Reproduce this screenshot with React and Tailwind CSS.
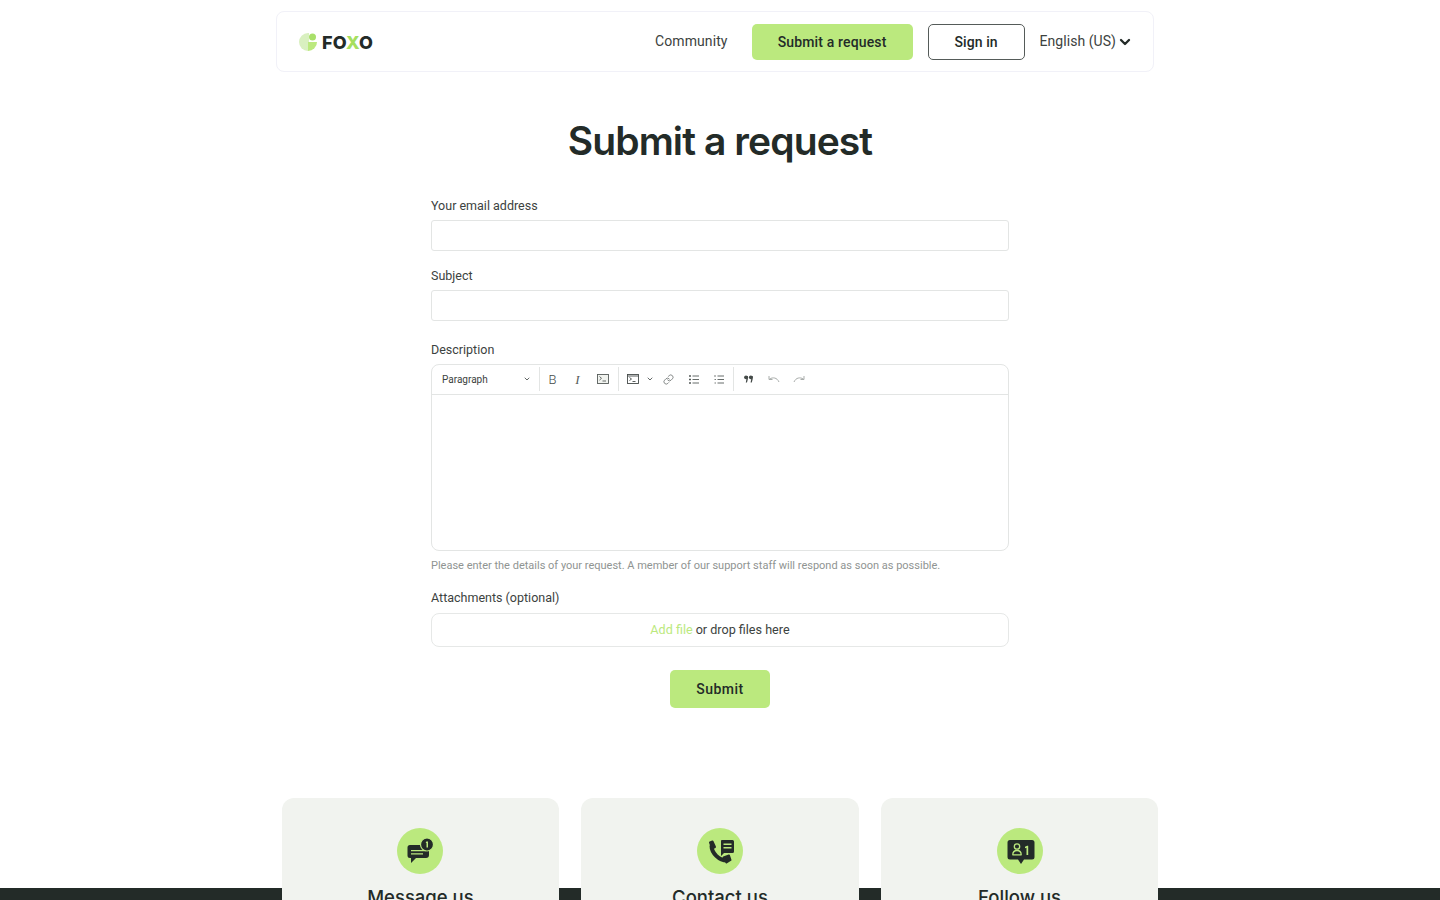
import React from 'react'
import { Link, ChevronDown } from 'lucide-react'

function Logo() {
  return (
    <div className="flex items-center">
      <svg width="18" height="18" viewBox="0 0 18 18" className="mr-[5px]">
        <path d="M9 0A9 9 0 0 0 9 18Z" fill="#d9f0c0" />
        <path d="M9 0h1v9H9z" fill="#d9f0c0" />
        <circle cx="13.500" cy="4" r="3.500" fill="#a9e06a" />
        <path d="M9 9H18A9 9 0 0 1 9 18Z" fill="#bce97f" />
      </svg>
      <span className="mt-[2px] font-['Inter',sans-serif] text-[18px] font-extrabold leading-none tracking-[0.3px] text-[#232b28]">
        FO<span className="text-[#a6df5f]">X</span>O
      </span>
    </div>
  )
}

function Header() {
  return (
    <header className="ml-[276px] mt-[11px] flex h-[61px] w-[878px] items-center rounded-lg border border-[#f1f1f8] pl-[22px] pr-[20px]">
      <Logo />
      <nav className="ml-auto flex items-center">
        <a className="mr-[24px] text-[14px] tracking-[0.1px] text-[#3c4240]">Community</a>
        <a className="mr-[15px] flex h-9 w-[161px] items-center justify-center rounded-[5px] bg-[#bbe97e] pt-px text-[14px] font-medium tracking-[0.15px] text-[#232b28]">Submit a request</a>
        <a className="mr-[15px] flex h-9 w-[97px] items-center justify-center rounded-[5px] border border-[#555b59] pt-px text-[14px] font-medium tracking-[0.1px] text-[#232b28]">Sign in</a>
        <span className="text-[14px] tracking-[0.05px] text-[#3c4240]">English (US)</span>
        <ChevronDown size={16} strokeWidth={3.500} className="ml-px text-[#232b28]" />
      </nav>
    </header>
  )
}

function Field({ label, className }) {
  return (
    <div className={className}>
      <label className="block text-[12.500px] leading-[20px] text-[#3c4240]">{label}</label>
      <div className="mt-[4px] h-[31px] rounded-[3px] border border-[#e3e5e4]" />
    </div>
  )
}

function ToolBtn({ children }) {
  return <span className="flex w-[25px] items-center justify-center">{children}</span>
}

function ImageIcon() {
  return (
    <svg width="12" height="10" viewBox="0 0 12 10" fill="none" stroke="#555b59" strokeWidth="0.9">
      <rect x="0.5" y="0.5" width="11" height="9" fill="#f1f3ef" />
      <path d="M2.500 2.500l2 1.800-2 1.800M5.500 7h3.500" />
    </svg>
  )
}

function SourceIcon() {
  return (
    <svg width="12" height="10" viewBox="0 0 12 10" fill="none" stroke="#454b49" strokeWidth="0.9">
      <rect x="0.5" y="0.5" width="11" height="9" />
      <path d="M0.5 2h11" />
      <path d="M2.500 3.500l2 1.500-2 1.500M5.500 7.500h3" />
    </svg>
  )
}

function ListIcon() {
  return (
    <svg width="10" height="9" viewBox="0 0 10 9" stroke="#555b59" strokeWidth="1">
      <path d="M0 1h2M0 4.500h2M0 8h2" strokeWidth="1.500" />
      <path d="M3.500 1H10M3.500 4.500H10M3.500 8H10" strokeWidth="0.9" />
    </svg>
  )
}

function NumberedIcon() {
  return (
    <svg width="10" height="9" viewBox="0 0 10 9" stroke="#555b59">
      <path d="M1 0v2M0.500 4.500h1.500M0.500 8h1.500" strokeWidth="0.8" />
      <path d="M3.500 1H10M3.500 4.500H10M3.500 8H10" strokeWidth="0.9" />
    </svg>
  )
}

function QuoteIcon() {
  return (
    <svg width="9" height="8" viewBox="0 0 9 8" fill="#454b49">
      <circle cx="2" cy="2.300" r="1.900" />
      <path d="M2.400 1H3.900V4L3 7.500H1.800L2.400 4Z" />
      <circle cx="6.800" cy="2.300" r="1.900" />
      <path d="M7.200 1H8.700V4L7.800 7.500H6.600L7.200 4Z" />
    </svg>
  )
}

function UndoIcon({ flip }) {
  return (
    <svg width="12" height="8" viewBox="0 0 12 8" fill="none" stroke="#a9adab" strokeWidth="1" className={flip ? '-scale-x-100' : ''}>
      <path d="M11 7C9 2.500 5 2 1.500 4" />
      <path d="M1 1v3.500h3.500" />
    </svg>
  )
}

function Toolbar() {
  return (
    <div className="flex h-[30px] items-center border-b border-[#e3e5e4] pb-px pl-[10px] font-['Roboto',sans-serif]">
      <span className="w-[81px] -translate-y-[0.5px] text-[10px] text-[#3c4240]">Paragraph</span>
      <ChevronDown size={8} strokeWidth={2.500} className="text-[#454b49]" />
      <span className="ml-[8px] h-[24px] w-px bg-[#e3e5e4]" />
      <ToolBtn><span className="text-[13px] font-light leading-none text-[#454b49]">B</span></ToolBtn>
      <ToolBtn><span className="font-['Liberation_Serif',serif] text-[13px] italic leading-none text-[#555b59]">I</span></ToolBtn>
      <ToolBtn><ImageIcon /></ToolBtn>
      <span className="ml-[3px] h-[24px] w-px bg-[#e3e5e4]" />
      <span className="ml-[8px]"><SourceIcon /></span>
      <ChevronDown size={8} strokeWidth={2.500} className="ml-[7px] text-[#454b49]" />
      <span className="ml-[2px]"><ToolBtn><Link size={11} strokeWidth={1.500} className="text-[#555b59]" /></ToolBtn></span>
      <ToolBtn><ListIcon /></ToolBtn>
      <ToolBtn><NumberedIcon /></ToolBtn>
      <span className="ml-[2px] h-[24px] w-px bg-[#e3e5e4]" />
      <span className="ml-[5px] flex w-[19px] justify-center"><QuoteIcon /></span>
      <span className="ml-[3px]"><ToolBtn><UndoIcon /></ToolBtn></span>
      <ToolBtn><UndoIcon flip /></ToolBtn>
    </div>
  )
}

function RequestForm() {
  return (
    <form className="mx-auto mt-[29px] w-[578px]">
      <Field label="Your email address" />
      <Field label="Subject" className="mt-[15px]" />
      <div className="mt-[20px]">
        <label className="block text-[12.500px] leading-[18px] text-[#3c4240]">Description</label>
        <div className="mt-[5px] h-[187px] rounded-lg border border-[#e3e5e4]">
          <Toolbar />
        </div>
        <p className="mt-[8px] text-[11px] leading-[14px] text-[#8f9492]">
          Please enter the details of your request. A member of our support staff will respond as soon as possible.
        </p>
      </div>
      <div className="mt-[15px]">
        <label className="block text-[12.500px] leading-[20px] text-[#3c4240]">Attachments (optional)</label>
        <div className="mt-[5px] flex h-[34px] items-center justify-center rounded-lg border border-[#e6e8e7] text-[12.600px] text-[#3c4240]">
          <span className="mr-[3px] text-[#bbe97e]">Add file</span> or drop files here
        </div>
      </div>
      <button type="button" className="mx-auto mt-[23px] flex h-[38px] w-[100px] items-center justify-center rounded-[5px] bg-[#bbe97e] text-[14px] font-medium tracking-[0.5px] text-[#232b28]">
        Submit
      </button>
    </form>
  )
}

function ChatIcon() {
  return (
    <svg width="46" height="46" viewBox="0 0 46 46" fill="#232b28">
      <path d="M13 17h16a3 3 0 0 1 3 3v7a3 3 0 0 1-3 3H19l-5 5v-5h-1a2.500 2.500 0 0 1-2.500-2.500V19.500A2.500 2.500 0 0 1 13 17Z" />
      <path d="M14 22h15v1.300H14zM14 25.200h12v1.300H14z" fill="#bbe97e" />
      <circle cx="30" cy="16.500" r="6.500" stroke="#bbe97e" strokeWidth="1.200" />
      <path d="M29.300 13.500h1.700v6h-1.500v-4.500h-.8z" fill="#bbe97e" />
    </svg>
  )
}

function PhoneIcon() {
  return (
    <svg width="46" height="46" viewBox="0 0 46 46" fill="#232b28">
      <path d="M14.500 17.500C14.500 25 22 32.500 30 32.500" fill="none" stroke="#232b28" strokeWidth="4" />
      <path d="M13 14.500 15.500 13.500 18 19 15 20.500Z" stroke="#232b28" strokeWidth="2" strokeLinejoin="round" />
      <path d="M26.500 29.500 32 27.500 33.500 32 29.500 34.500Z" stroke="#232b28" strokeWidth="2" strokeLinejoin="round" />
      <path d="M24.500 12h11a1.500 1.500 0 0 1 1.500 1.500v10a1.500 1.500 0 0 1-1.500 1.500H27l-3 3V13.500A1.500 1.500 0 0 1 24.500 12Z" />
      <path d="M26.500 15.500h8v1.400h-8zM26.500 19h8v1.400h-8z" fill="#bbe97e" />
    </svg>
  )
}

function FollowIcon() {
  return (
    <svg width="46" height="46" viewBox="0 0 46 46" fill="#232b28">
      <path d="M13 12h22a2.500 2.500 0 0 1 2.500 2.500v14.500a2.500 2.500 0 0 1-2.500 2.500h-8l-3 4.500-3-4.500h-8a2.500 2.500 0 0 1-2.500-2.500V14.500A2.500 2.500 0 0 1 13 12Z" />
      <circle cx="20" cy="18.500" r="2.700" fill="none" stroke="#bbe97e" strokeWidth="1.300" />
      <path d="M15.800 26.800c0-3 1.600-4.300 4.200-4.300s4.200 1.300 4.200 4.300z" fill="none" stroke="#bbe97e" strokeWidth="1.300" strokeLinejoin="round" />
      <path d="M28 18.800l2.200-1h1v9.200h-1.700v-7.200l-1.500.5z" fill="#bbe97e" />
    </svg>
  )
}

function InfoCard({ title, icon }) {
  return (
    <div className="flex h-[122px] flex-col items-center rounded-t-xl bg-[#f1f3ef] pt-[30px]">
      <span className="flex h-[46px] w-[46px] items-center justify-center rounded-full bg-[#bbe97e]">{icon}</span>
      <h3 className="mt-[11px] font-['Inter',sans-serif] text-[18.500px] font-medium leading-[24px] text-[#232b28]">{title}</h3>
    </div>
  )
}

export default function App() {
  return (
    <div className="h-[900px] overflow-hidden bg-white font-['Roboto',sans-serif]">
      <Header />
      <h1 className="mt-[43px] text-center font-['Inter',sans-serif] text-[39px] font-semibold leading-[52px] tracking-[-0.9px] text-[#232b28]">Submit a request</h1>
      <RequestForm />
      <section className="relative z-10 mx-auto mt-[90px] grid w-[876.670px] grid-cols-3 gap-[22px]">
        <InfoCard title="Message us" icon={<ChatIcon />} />
        <InfoCard title="Contact us" icon={<PhoneIcon />} />
        <InfoCard title="Follow us" icon={<FollowIcon />} />
      </section>
      <footer className="-mt-[32px] h-[40px] bg-[#232b28]" />
    </div>
  )
}
